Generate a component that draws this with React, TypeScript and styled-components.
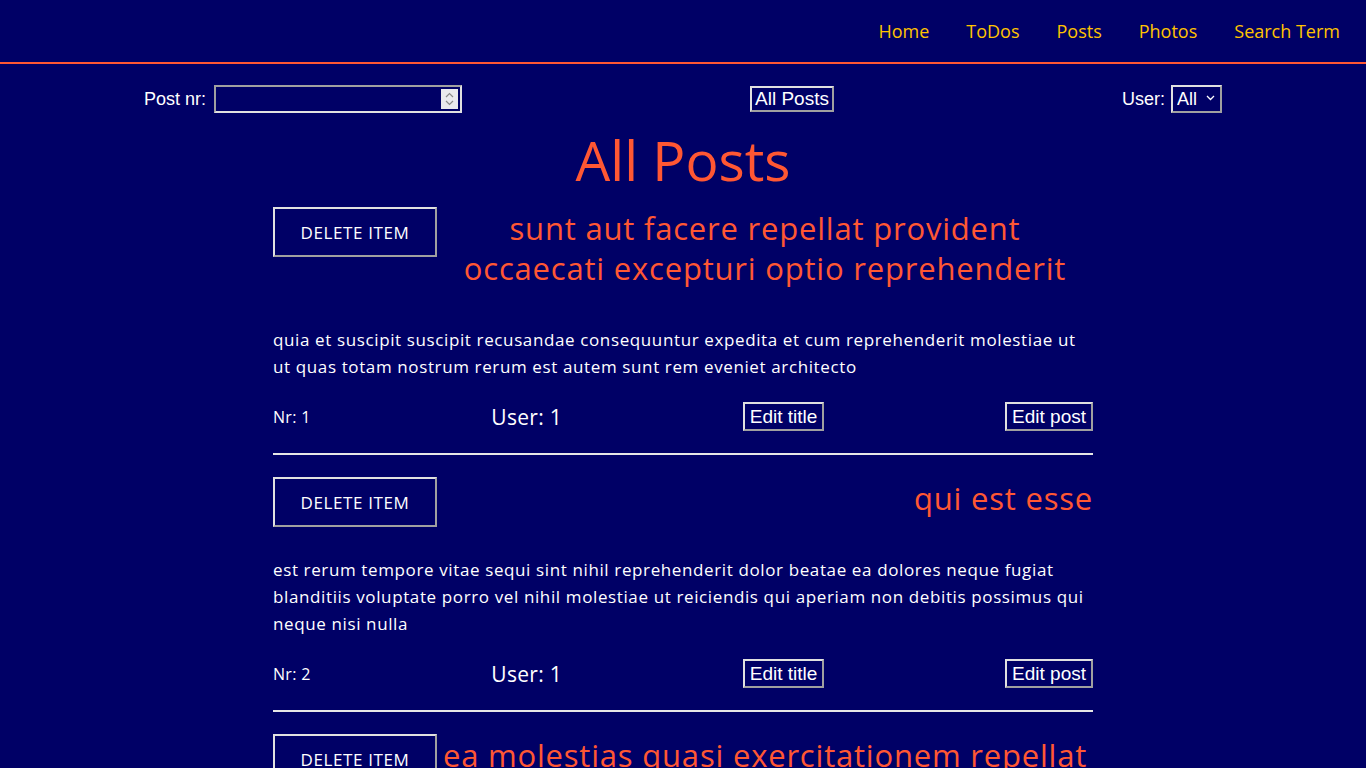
import React from "react";
import styled, { createGlobalStyle } from "styled-components";

const Global = createGlobalStyle`
  html, body { margin: 0; padding: 0; background: #000066; }
  body { font-family: "Open Sans", "Noto Sans", sans-serif; color: #ffffff; overflow: hidden; }
`;

const Header = styled.header`
  height: 62px;
  border-bottom: 2px solid #ff5733;
  display: flex;
  justify-content: flex-end;
  align-items: center;
  padding-right: 26px;
`;

const Nav = styled.nav`
  display: flex;
  gap: 37px;
`;

const NavLink = styled.a`
  color: #ffc300;
  font-size: 18px;
  text-decoration: none;
  cursor: pointer;
`;

const FilterRow = styled.div`
  width: 1078px;
  margin: 21px auto 0;
  height: 28px;
  display: flex;
  justify-content: space-between;
  align-items: center;
`;

const Field = styled.label<{ $gap: number }>`
  display: flex;
  align-items: center;
  gap: ${(p) => p.$gap}px;
  font-family: "Liberation Sans", Arial, sans-serif;
  font-size: 18px;
  color: #fff;
`;

const ControlWrap = styled.span`
  position: relative;
  display: inline-flex;
`;

const NumberInput = styled.input`
  width: 248px;
  height: 28px;
  box-sizing: border-box;
  background: #000066;
  color: #fff;
  border: 2px solid;
  border-color: #a0a0a0 #e0e0e0 #e0e0e0 #a0a0a0;
  font-size: 16px;
  padding: 0 4px;
  &::-webkit-inner-spin-button, &::-webkit-outer-spin-button { -webkit-appearance: none; margin: 0; }
`;

const Spinner = styled.span`
  position: absolute;
  right: 4px;
  top: 4px;
  width: 17px;
  height: 20px;
  background: #e9e9ed;
  display: flex;
  align-items: center;
  justify-content: center;
  pointer-events: none;
`;

const Chevron = styled.span`
  position: absolute;
  right: 7px;
  top: 10px;
  display: flex;
  pointer-events: none;
`;

const SystemButton = styled.button<{ $pad: string; $lh: number }>`
  font-family: "Liberation Sans", Arial, sans-serif;
  font-size: 19px;
  color: #fff;
  background: transparent;
  border: 2px solid;
  border-color: #e0e0e0 #a0a0a0 #a0a0a0 #e0e0e0;
  padding: ${(p) => p.$pad};
  line-height: ${(p) => p.$lh}px;
  cursor: pointer;
`;

const Select = styled.select`
  appearance: none;
  -webkit-appearance: none;
  font-family: "Liberation Sans", Arial, sans-serif;
  font-size: 18px;
  color: #fff;
  background: #000066;
  border: 2px solid;
  border-color: #e0e0e0 #a0a0a0 #a0a0a0 #e0e0e0;
  height: 28px;
  width: 51px;
  padding: 0 0 0 4px;
`;

const Title = styled.h1`
  margin: 17px 0;
  text-align: center;
  color: #ff5733;
  font-size: 55px;
  line-height: 60px;
  font-weight: 400;
`;

const List = styled.main`
  width: 820px;
  margin: 0 auto;
`;

const Post = styled.article``;

const TopRow = styled.div`
  display: flex;
  justify-content: space-between;
  align-items: flex-start;
`;

const DeleteButton = styled.button`
  flex: none;
  width: 164px;
  height: 50px;
  background: transparent;
  color: #fff;
  font-family: "Open Sans", "Noto Sans", sans-serif;
  font-size: 17px;
  letter-spacing: 0.6px;
  text-transform: uppercase;
  border: 2px solid;
  border-color: #e0e0e0 #a0a0a0 #a0a0a0 #e0e0e0;
  cursor: pointer;
`;

const PostTitle = styled.h2`
  margin: 1px 0 21px;
  color: #ff5733;
  font-size: 31px;
  letter-spacing: 0.8px;
  line-height: 40px;
  font-weight: 400;
  text-align: center;
`;

const Body = styled.p`
  margin: 17px 0;
  font-size: 17px;
  letter-spacing: 0.62px;
  line-height: 27px;
`;

const Footer = styled.div`
  padding-top: 5px;
  height: 29px;
  display: flex;
  justify-content: space-between;
  align-items: center;
`;

const Meta = styled.span<{ $size: number }>`
  font-size: ${(p) => p.$size}px;
  letter-spacing: 0.3px;
`;

const Rule = styled.hr`
  margin: 22px 0 22px;
  border: none;
  height: 2px;
  background: #e6e6e6;
`;

const posts = [
  {
    id: 1,
    userId: 1,
    title: "sunt aut facere repellat provident occaecati excepturi optio reprehenderit",
    body: "quia et suscipit suscipit recusandae consequuntur expedita et cum reprehenderit molestiae ut ut quas totam nostrum rerum est autem sunt rem eveniet architecto",
  },
  {
    id: 2,
    userId: 1,
    title: "qui est esse",
    body: "est rerum tempore vitae sequi sint nihil reprehenderit dolor beatae ea dolores neque fugiat blanditiis voluptate porro vel nihil molestiae ut reiciendis qui aperiam non debitis possimus qui neque nisi nulla",
  },
  {
    id: 3,
    userId: 1,
    title: "ea molestias quasi exercitationem repellat qui ipsa sit aut",
    body: "et iusto sed quo iure voluptatem occaecati omnis eligendi aut ad voluptatem doloribus vel accusantium quis pariatur molestiae porro eius odio et labore et velit aut",
  },
];

export default function App() {
  return (
    <>
      <Global />
      <Header>
        <Nav>
          {["Home", "ToDos", "Posts", "Photos", "Search Term"].map((l) => (
            <NavLink key={l}>{l}</NavLink>
          ))}
        </Nav>
      </Header>
      <FilterRow>
        <Field $gap={8}>
          Post nr:
          <ControlWrap>
            <NumberInput type="number" />
            <Spinner>
              <svg width="9" height="14" viewBox="0 0 9 14" fill="none" stroke="#8a8a8a" strokeWidth="1.2">
                <path d="M1 5 L4.5 1.5 L8 5" />
                <path d="M1 9 L4.5 12.5 L8 9" />
              </svg>
            </Spinner>
          </ControlWrap>
        </Field>
        <SystemButton $pad="1px 3px" $lh={20}>All Posts</SystemButton>
        <Field $gap={6}>
          User:
          <ControlWrap>
            <Select defaultValue="All">
              <option>All</option>
            </Select>
            <Chevron>
              <svg width="9" height="6" viewBox="0 0 9 6" fill="none" stroke="#ffffff" strokeWidth="1.3">
                <path d="M1 1 L4.5 4.5 L8 1" />
              </svg>
            </Chevron>
          </ControlWrap>
        </Field>
      </FilterRow>
      <Title>All Posts</Title>
      <List>
        {posts.map((p) => (
          <Post key={p.id}>
            <TopRow>
              <DeleteButton>Delete item</DeleteButton>
              <PostTitle>{p.title}</PostTitle>
            </TopRow>
            <Body>{p.body}</Body>
            <Footer>
              <Meta $size={16}>Nr: {p.id}</Meta>
              <Meta $size={21}>User: {p.userId}</Meta>
              <SystemButton $pad="2px 5px" $lh={21}>Edit title</SystemButton>
              <SystemButton $pad="2px 5px" $lh={21}>Edit post</SystemButton>
            </Footer>
            <Rule />
          </Post>
        ))}
      </List>
    </>
  );
}
